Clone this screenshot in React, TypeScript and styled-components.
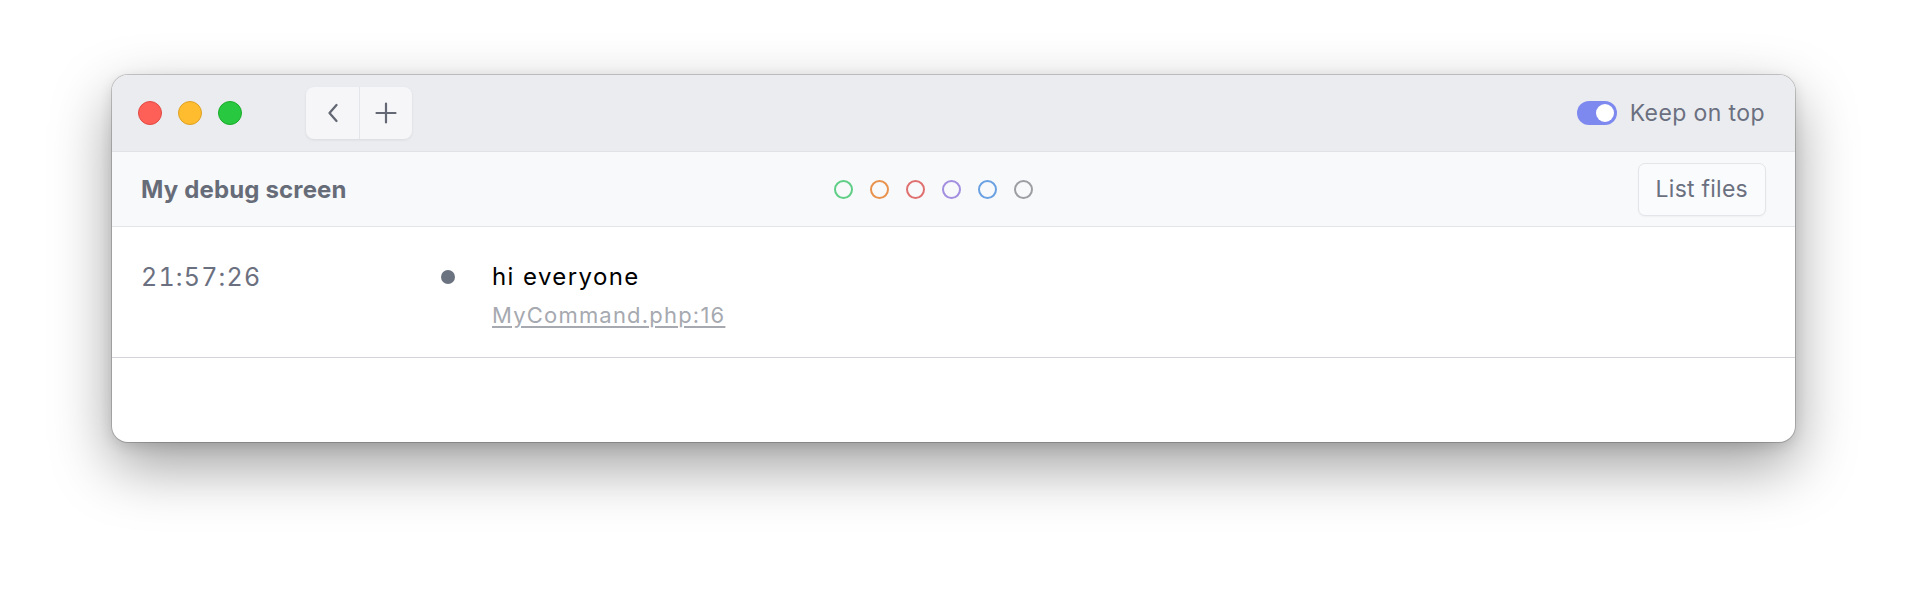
import styled, { createGlobalStyle } from "styled-components";

const GlobalStyle = createGlobalStyle`
  html, body {
    margin: 0;
    padding: 0;
    background: #ffffff;
  }
  body {
    font-family: Inter, "Noto Sans", "Liberation Sans", sans-serif;
    -webkit-font-smoothing: antialiased;
  }
`;

const Page = styled.div`
  width: 1906px;
  height: 590px;
  box-sizing: border-box;
  padding: 75px 0 0 112px;
  overflow: hidden;
`;

const Window = styled.div`
  width: 1683px;
  height: 367px;
  box-sizing: border-box;
  border-radius: 16px;
  overflow: hidden;
  background: #ffffff;
  display: flex;
  flex-direction: column;
  box-shadow: 0 0 0 1px rgba(0, 0, 0, 0.18), 0 24px 60px rgba(0, 0, 0, 0.38),
    0 4px 14px rgba(0, 0, 0, 0.12);
`;

const TitleBar = styled.div`
  height: 76px;
  flex-shrink: 0;
  display: flex;
  align-items: center;
  padding: 0 30px 0 26px;
  background: #ebecf0;
  border-bottom: 1px solid #e1e2e6;
`;

const Lights = styled.div`
  display: flex;
  gap: 16px;
`;

const Light = styled.span<{ $color: string; $edge: string }>`
  width: 24px;
  height: 24px;
  border-radius: 50%;
  box-sizing: border-box;
  background: ${(p) => p.$color};
  border: 1px solid ${(p) => p.$edge};
`;

const NavGroup = styled.div`
  display: flex;
  margin-left: 64px;
  height: 52px;
  border-radius: 8px;
  background: #f6f6f8;
  box-shadow: 0 1px 3px rgba(0, 0, 0, 0.08);
  overflow: hidden;
`;

const NavButton = styled.button`
  width: 53px;
  height: 52px;
  padding: 0;
  border: none;
  background: transparent;
  display: flex;
  align-items: center;
  justify-content: center;
  color: #646874;
  & + & {
    border-left: 1px solid #e4e5e9;
  }
`;

const Spacer = styled.div`
  flex: 1;
`;

const KeepOnTop = styled.label`
  display: flex;
  align-items: center;
  gap: 13px;
  font-size: 23px;
  letter-spacing: 0.4px;
  color: #6b7080;
`;

const Toggle = styled.span<{ $on: boolean }>`
  width: 40px;
  height: 24px;
  border-radius: 12px;
  box-sizing: border-box;
  padding: 3px;
  display: flex;
  justify-content: ${(p) => (p.$on ? "flex-end" : "flex-start")};
  background: ${(p) => (p.$on ? "#7e89f0" : "#d1d5db")};
  &::after {
    content: "";
    width: 18px;
    height: 18px;
    border-radius: 50%;
    background: #ffffff;
  }
`;

const Toolbar = styled.div`
  height: 74px;
  flex-shrink: 0;
  display: grid;
  grid-template-columns: 1fr auto 1fr;
  align-items: center;
  padding: 0 29px;
  background: #f8f9fa;
  border-bottom: 1px solid #e4e5e9;
`;

const ScreenTitle = styled.div`
  font-size: 24px;
  font-weight: 700;
  letter-spacing: 0.15px;
  color: #676c79;
`;

const ColorFilters = styled.div`
  display: flex;
  gap: 17px;
  margin-right: 40px;
`;

const ColorRing = styled.span<{ $color: string }>`
  width: 19px;
  height: 19px;
  box-sizing: border-box;
  border-radius: 50%;
  border: 2px solid ${(p) => p.$color};
`;

const ToolbarEnd = styled.div`
  display: flex;
  justify-content: flex-end;
`;

const ListButton = styled.button`
  height: 53px;
  padding: 0 17px;
  font-family: inherit;
  font-size: 23px;
  letter-spacing: 0.25px;
  color: #6b7080;
  background: #fafbfc;
  border: 1px solid #e3e5e9;
  border-radius: 7px;
  box-shadow: 0 1px 2px rgba(0, 0, 0, 0.04);
`;

const LogRow = styled.div`
  display: flex;
  align-items: flex-start;
  padding: 34px 29px 28px;
  border-bottom: 1px solid #d3d4d9;
`;

const Time = styled.div`
  width: 300px;
  font-size: 25px;
  line-height: 32px;
  letter-spacing: 1.2px;
  color: #6b7080;
  font-variant-numeric: tabular-nums;
`;

const Bullet = styled.span`
  width: 14px;
  height: 14px;
  margin: 9px 37px 0 0;
  border-radius: 50%;
  background: #6b7280;
  flex-shrink: 0;
`;

const Message = styled.div`
  display: flex;
  flex-direction: column;
`;

const MessageText = styled.div`
  font-size: 24px;
  line-height: 32px;
  letter-spacing: 1.4px;
  color: #000000;
`;

const Origin = styled.a`
  margin-top: 8px;
  font-size: 22px;
  line-height: 28px;
  letter-spacing: 1.2px;
  color: #a6a9b0;
  text-decoration: underline;
  text-underline-offset: 3px;
`;

const filterColors = ["#5fce86", "#e8924d", "#e07070", "#a28fe0", "#6aa1e2", "#9d9ea3"];

export default function App() {
  return (
    <>
      <GlobalStyle />
      <Page>
        <Window>
          <TitleBar>
            <Lights>
              <Light $color="#fe5f57" $edge="#e14942" />
              <Light $color="#febc2e" $edge="#dea123" />
              <Light $color="#28c840" $edge="#1aab29" />
            </Lights>
            <NavGroup>
              <NavButton aria-label="Back">
                <svg width="12" height="20" viewBox="0 0 12 20" fill="none">
                  <path
                    d="M9.5 2 L2.5 10 L9.5 18"
                    stroke="currentColor"
                    strokeWidth="2.3"
                    strokeLinecap="round"
                    strokeLinejoin="round"
                  />
                </svg>
              </NavButton>
              <NavButton aria-label="New screen">
                <svg width="22" height="22" viewBox="0 0 22 22" fill="none">
                  <path
                    d="M11 1.5 V20.5 M1.5 11 H20.5"
                    stroke="currentColor"
                    strokeWidth="2.2"
                    strokeLinecap="round"
                  />
                </svg>
              </NavButton>
            </NavGroup>
            <Spacer />
            <KeepOnTop>
              <Toggle $on />
              Keep on top
            </KeepOnTop>
          </TitleBar>

          <Toolbar>
            <ScreenTitle>My debug screen</ScreenTitle>
            <ColorFilters>
              {filterColors.map((c) => (
                <ColorRing key={c} $color={c} />
              ))}
            </ColorFilters>
            <ToolbarEnd>
              <ListButton>List files</ListButton>
            </ToolbarEnd>
          </Toolbar>

          <LogRow>
            <Time>21:57:26</Time>
            <Bullet />
            <Message>
              <MessageText>hi everyone</MessageText>
              <Origin href="#">MyCommand.php:16</Origin>
            </Message>
          </LogRow>
        </Window>
      </Page>
    </>
  );
}
